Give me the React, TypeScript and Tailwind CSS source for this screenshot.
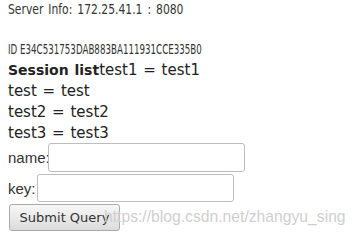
import React from "react";

export default function App() {
  const font = { fontFamily: '"DejaVu Sans", sans-serif' };
  const label = { fontFamily: '"Liberation Sans", Arial, sans-serif' };
  return (
    <div className="relative w-[354px] h-[242px] bg-white overflow-hidden text-[15px] leading-[21px] text-[#222]" style={font}>
      <div className="pl-[8px] -mt-[3px]">
        <div className="mt-[2px] h-[21px] text-[14px] text-[#333] whitespace-nowrap">
          <span className="inline-block origin-left scale-x-[0.77] [word-spacing:2px]">Server Info: 172.25.41.1 : 8080</span>
        </div>
        <div className="h-[19px]" />
        <div className="h-[21px] text-[14.5px] text-[#333] whitespace-nowrap">
          <span className="inline-block origin-left scale-x-[0.6]">ID E34C531753DAB883BA111931CCE335B0</span>
        </div>
        <div className="[word-spacing:1px]"><b className="text-[14px]">Session list</b>test1 = test1</div>
        <div className="[word-spacing:1px]">test = test</div>
        <div className="[word-spacing:1px]">test2 = test2</div>
        <div className="[word-spacing:1px]">test3 = test3</div>
        <div className="flex items-center -mt-[1px] h-[29px]">
          <span className="w-[40px] text-[15px] text-[#333]" style={label}>name:</span>
          <input className="w-[197px] h-[29px] border border-[#bdbdbd] rounded-[3px] bg-white" />
        </div>
        <div className="flex items-center mt-[2px] h-[28px]">
          <span className="w-[29px] text-[15px] text-[#333]" style={label}>key:</span>
          <input className="w-[197px] h-[28px] border border-[#bdbdbd] rounded-[3px] bg-white" />
        </div>
        <button className="mt-[2px] ml-[1px] w-[111px] h-[27px] border border-[#a9a9a9] rounded-[3px] bg-gradient-to-b from-[#f7f7f7] to-[#dcdcdc] text-[13px] leading-[20px] text-[#333]">Submit Query</button>
      </div>
      <div className="absolute left-[104px] top-[206px] text-[15.7px] leading-[21px] text-[#cfcfcf]" style={label}>https://blog.csdn.net/zhangyu_sing</div>
    </div>
  );
}
